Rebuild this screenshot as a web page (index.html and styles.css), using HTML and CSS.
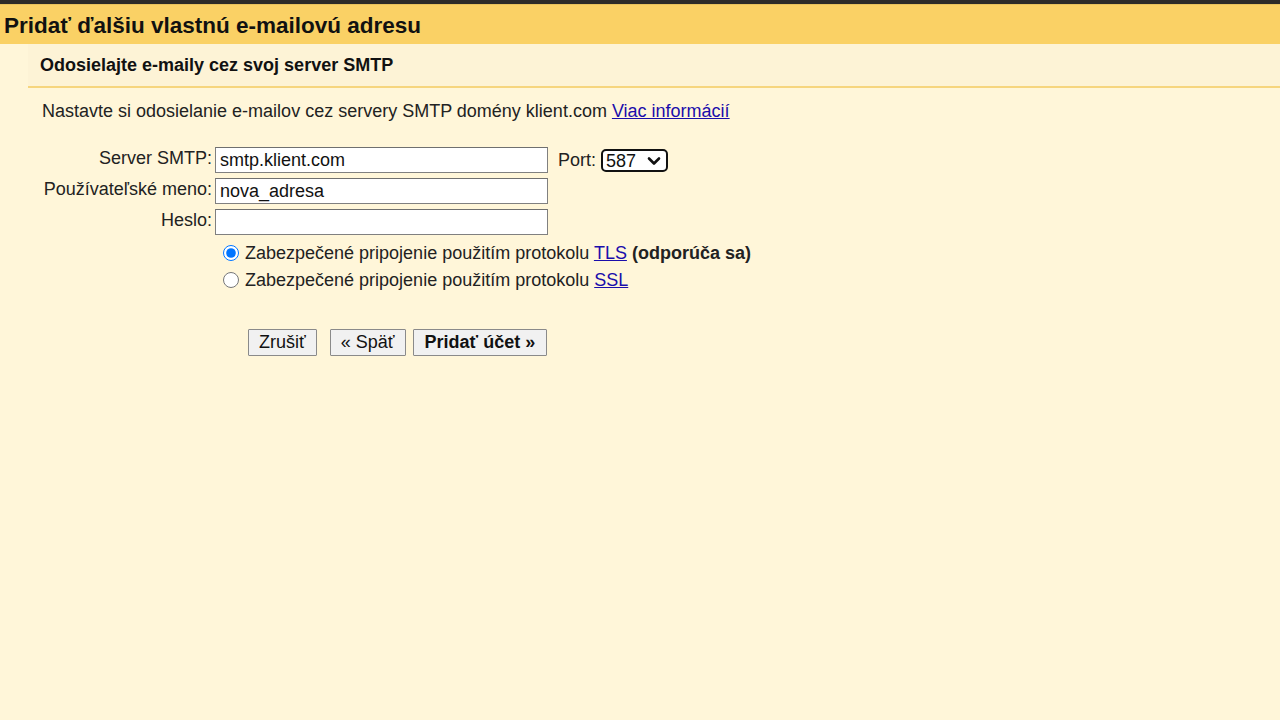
FILE: index.html
```html
<!DOCTYPE html>
<html lang="sk">
<head>
    <meta charset="UTF-8">
    <title>Pridať ďalšiu vlastnú e-mailovú adresu</title>
    <link rel="stylesheet" href="styles.css">
</head>
<body>
    <div class="topbar"></div>
    <div class="header">
        <h1>Pridať ďalšiu vlastnú e-mailovú adresu</h1>
    </div>
    <div class="content">
        <div class="subhead">Odosielajte e-maily cez svoj server SMTP</div>
        <p class="intro">Nastavte si odosielanie e-mailov cez servery SMTP domény klient.com <a href="#">Viac informácií</a></p>

        <div class="form">
            <label class="label" for="smtp">Server SMTP:</label>
            <div class="field">
                <input type="text" id="smtp" value="smtp.klient.com">
                <span class="port">Port:</span>
                <span class="select-wrap">
                    <select class="port-select">
                        <option>587</option>
                        <option>465</option>
                        <option>25</option>
                    </select>
                    <svg class="chevron" width="14" height="10" viewBox="0 0 14 10"><path d="M2 2.5 L7 7.5 L12 2.5" fill="none" stroke="#111" stroke-width="2.6" stroke-linecap="round" stroke-linejoin="round"/></svg>
                </span>
            </div>

            <label class="label" for="user">Používateľské meno:</label>
            <div class="field">
                <input type="text" id="user" value="nova_adresa">
            </div>

            <label class="label" for="pass">Heslo:</label>
            <div class="field">
                <input type="password" id="pass">
            </div>

            <div></div>
            <div class="options">
                <label class="option"><input type="radio" name="sec" checked>Zabezpečené pripojenie použitím protokolu <a href="#">TLS</a> <b>(odporúča sa)</b></label>
                <label class="option"><input type="radio" name="sec">Zabezpečené pripojenie použitím protokolu <a href="#">SSL</a></label>
            </div>
        </div>

        <div class="buttons">
            <button>Zrušiť</button>
            <button>« Späť</button>
            <button class="primary">Pridať účet »</button>
        </div>
    </div>
</body>
</html>
```

FILE: styles.css
```css
body {
    margin: 0;
    font-family: "Liberation Sans", Arial, sans-serif;
    font-size: 18px;
    color: #222;
    background: #fff6d9;
    height: 720px;
    overflow: hidden;
}
.topbar {
    height: 4px;
    background: #2d2b28;
}
.header {
    height: 39px;
    background: #fad165;
    border-top: 1px solid #e9c25c;
    display: flex;
    align-items: center;
    padding-left: 4px;
}
.header h1 {
    margin: 2px 0 0;
    font-size: 22.5px;
    font-weight: bold;
    color: #111;
}
.content {
    margin-left: 28px;
}
.subhead {
    height: 42px;
    line-height: 42px;
    padding-left: 12px;
    font-size: 18px;
    font-weight: bold;
    color: #111;
    background: #fdf3d6;
    border-bottom: 2px solid #f6d57e;
}
.intro {
    margin: 12px 0 0 14px;
    line-height: 22px;
}
a {
    color: #1a0dab;
}
.form {
    display: grid;
    grid-template-columns: 184px auto;
    row-gap: 5px;
    margin-top: 25px;
}
.label {
    text-align: right;
    line-height: 22px;
}
.field {
    display: flex;
    align-items: center;
    padding-left: 3px;
}
.field input {
    width: 323px;
    height: 24px;
    margin: 0;
    padding: 0 4px;
    border: 1px solid #808080;
    border-top-color: #6f6f6f;
    background: #fff;
    font-family: inherit;
    font-size: 18px;
    color: #111;
}
.port {
    margin-left: 10px;
}
.select-wrap {
    position: relative;
    margin-left: 5px;
    display: inline-flex;
}
.port-select {
    appearance: none;
    height: 23px;
    width: 67px;
    border: 2px solid #111;
    border-radius: 5px;
    background: #fff;
    font-family: inherit;
    font-size: 18px;
    color: #111;
    padding: 0 3px;
}
.chevron {
    position: absolute;
    right: 7px;
    top: 7px;
    pointer-events: none;
}
.options {
    margin-top: 0;
    padding-left: 11px;
}
.option {
    display: block;
    height: 27px;
    line-height: 27px;
}
.option input {
    margin: 0 6px 0 0;
    width: 16px;
    height: 16px;
    vertical-align: -2px;
}
.buttons {
    margin: 35px 0 0 220px;
    display: flex;
    gap: 7px;
}
.buttons button {
    height: 27px;
    padding: 0 10px;
    font-family: inherit;
    font-size: 18px;
    color: #111;
    background: #f1f1f1;
    border: 1px solid #8a8a8a;
    border-radius: 1px;
}
.buttons button:first-child {
    margin-right: 6px;
}
.buttons .primary {
    font-weight: bold;
    padding: 0 11px;
}
```
